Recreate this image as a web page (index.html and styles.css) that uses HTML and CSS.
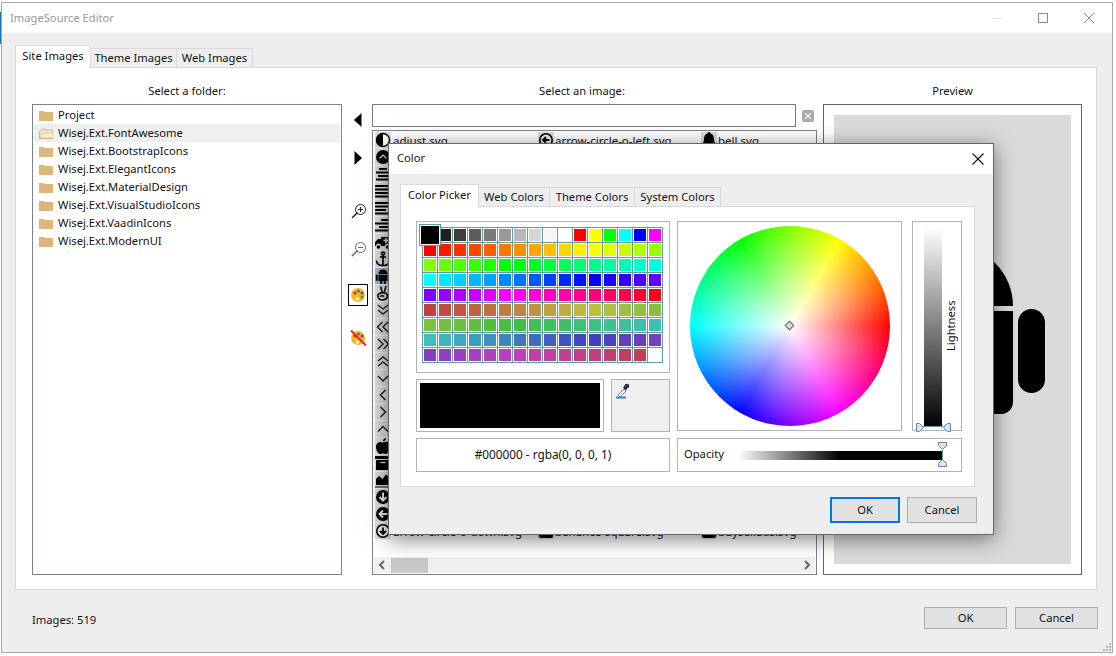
FILE: index.html
```html
<!DOCTYPE html>
<html lang="en">
<head>
<meta charset="utf-8">
<title>ImageSource Editor</title>
<link rel="stylesheet" href="styles.css">
</head>
<body>
<div class="desk-edge"></div>
<div class="window">
  <header class="titlebar">
    <span class="title">ImageSource Editor</span>
    <div class="win-controls">
      <span class="win-btn"><svg width="12" height="12" viewBox="0 0 12 12"><path d="M1 6.500h10" stroke="#e2e2e2"/></svg></span>
      <span class="win-btn"><svg width="12" height="12" viewBox="0 0 12 12"><rect x="1.500" y="1.500" width="9" height="9" fill="none" stroke="#8a8a8a"/></svg></span>
      <span class="win-btn"><svg width="12" height="12" viewBox="0 0 12 12"><path d="M1 1l10 10M11 1L1 11" stroke="#8a8a8a"/></svg></span>
    </div>
  </header>
  <div class="win-body">
    <div class="tabs main-tabs">
      <span class="tab active">Site Images</span>
      <span class="tab">Theme Images</span>
      <span class="tab">Web Images</span>
    </div>
    <div class="main-pane">
      <section class="col col-folders">
        <div class="col-label">Select a folder:</div>
        <ul class="folders">
          <li><svg class="folder" viewBox="0 0 14 11"><path d="M0 1h5l1 1h8v9H0z" fill="#dcb67a"/></svg>Project</li>
          <li class="sel"><svg class="folder" viewBox="0 0 14 11"><path d="M.5 10.500V4L3 1h3l1 1h6.500v8.500z" fill="#f3e6cf" stroke="#dcb67a"/><path d="M1 10l2-5h11v5z" fill="#f5edde" stroke="#dcb67a" stroke-width=".7"/></svg>Wisej.Ext.FontAwesome</li>
          <li><svg class="folder" viewBox="0 0 14 11"><path d="M0 1h5l1 1h8v9H0z" fill="#dcb67a"/></svg>Wisej.Ext.BootstrapIcons</li>
          <li><svg class="folder" viewBox="0 0 14 11"><path d="M0 1h5l1 1h8v9H0z" fill="#dcb67a"/></svg>Wisej.Ext.ElegantIcons</li>
          <li><svg class="folder" viewBox="0 0 14 11"><path d="M0 1h5l1 1h8v9H0z" fill="#dcb67a"/></svg>Wisej.Ext.MaterialDesign</li>
          <li><svg class="folder" viewBox="0 0 14 11"><path d="M0 1h5l1 1h8v9H0z" fill="#dcb67a"/></svg>Wisej.Ext.VisualStudioIcons</li>
          <li><svg class="folder" viewBox="0 0 14 11"><path d="M0 1h5l1 1h8v9H0z" fill="#dcb67a"/></svg>Wisej.Ext.VaadinIcons</li>
          <li><svg class="folder" viewBox="0 0 14 11"><path d="M0 1h5l1 1h8v9H0z" fill="#dcb67a"/></svg>Wisej.Ext.ModernUI</li>
        </ul>
      </section>

      <section class="col col-tools">
        <button class="tool t-prev"><svg width="8" height="14" viewBox="0 0 8 14"><path d="M7.500 0v14L0 7z"/></svg></button>
        <button class="tool t-next"><svg width="8" height="14" viewBox="0 0 8 14"><path d="M.5 0v14L8 7z"/></svg></button>
        <button class="tool t-zoomin"><svg width="16" height="16" viewBox="0 0 16 16" fill="none" stroke="#222"><circle cx="9.500" cy="6.500" r="5"/><path d="M6.500 9.500L1 15" stroke-width="1.500"/><path d="M7 6.500h5M9.500 4v5"/></svg></button>
        <button class="tool t-zoomout"><svg width="16" height="16" viewBox="0 0 16 16" fill="none" stroke="#666"><circle cx="9.500" cy="6.500" r="5"/><path d="M6.500 9.500L1 15" stroke-width="1.500"/><path d="M7 6.500h5"/></svg></button>
        <button class="tool t-palette"><svg width="16" height="16" viewBox="0 0 16 16"><ellipse cx="8" cy="8" rx="7" ry="7" fill="#f5b81f"/><circle cx="5" cy="6" r="1.500" fill="#d62e2e"/><circle cx="8.500" cy="4" r="1.500" fill="#3c6fd1"/><circle cx="12" cy="6" r="1.500" fill="#7b3fb3"/><circle cx="12" cy="10" r="1.500" fill="#3aa04a"/><circle cx="7.500" cy="12" r="1.800" fill="#fff2d0"/></svg></button>
        <button class="tool t-nopalette"><svg width="18" height="18" viewBox="0 0 18 18"><ellipse cx="9" cy="9" rx="7" ry="7" fill="#f5b81f"/><circle cx="6" cy="7" r="1.500" fill="#d62e2e"/><circle cx="9.500" cy="5" r="1.500" fill="#3c6fd1"/><circle cx="13" cy="7" r="1.500" fill="#7b3fb3"/><circle cx="8.500" cy="13" r="1.800" fill="#fff2d0"/><path d="M2 1.500l15 15" stroke="#e8242a" stroke-width="2"/></svg></button>
      </section>

      <section class="col col-images">
        <div class="col-label">Select an image:</div>
        <div class="search-row">
          <input class="search" type="text">
          <span class="clear"><svg width="8" height="8" viewBox="0 0 8 8"><path d="M1 1l6 6M7 1L1 7" stroke="#e9e9e9" stroke-width="1.500"/></svg></span>
        </div>
        <div class="image-list">
          <ul class="image-grid">
            <li><span class="ic"><svg viewBox="0 0 16 16"><circle cx="8" cy="8" r="6.500" fill="#fff" stroke="#000" stroke-width="1.400"/><path d="M8 1a7 7 0 0 0 0 14z"/></svg></span>adjust.svg</li>
            <li><span class="ic"><svg viewBox="0 0 16 16"><circle cx="8" cy="8" r="7"/><path d="M4.500 9.500L8 6l3.500 3.500" fill="none" stroke="#ddd" stroke-width="1.200"/></svg></span></li>
            <li><span class="ic"><svg viewBox="0 0 16 16"><path d="M4 2h8v2H4zM1 5.500h14v2H1zM3 9h10v2H3zM1 12.500h14v2H1z"/></svg></span></li>
            <li><span class="ic"><svg viewBox="0 0 16 16"><path d="M0 2h16v2H0zM0 5.500h16v2H0zM0 9h16v2H0zM0 12.500h16v2H0z"/></svg></span></li>
            <li><span class="ic"><svg viewBox="0 0 16 16"><path d="M0 2h13v2H0zM0 5.500h15v2H0zM0 9h11v2H0zM0 12.500h15v2H0z"/></svg></span></li>
            <li><span class="ic"><svg viewBox="0 0 16 16"><path d="M6 2h10v2H6zM0 5.500h16v2H0zM4 9h12v2H4zM0 12.500h16v2H0z"/></svg></span></li>
            <li><span class="ic"><svg viewBox="0 0 16 16"><path d="M6 3h10v9h-1a2.500 2.500 0 0 0-5 0H6a2.500 2.500 0 0 0-5 0H0V8l3-3h3z"/><circle cx="3.500" cy="13" r="1.800"/><circle cx="12.500" cy="13" r="1.800"/><path d="M11 4v5M8.500 6.500h5" stroke="#ddd" stroke-width="1.600"/></svg></span></li>
            <li><span class="ic"><svg viewBox="0 0 16 16" fill="none" stroke="#000" stroke-width="1.600"><circle cx="8" cy="2.500" r="1.500"/><path d="M8 4v10.500M5 6h6M1.500 9.500c0 3.500 3 5 6.500 5s6.500-1.500 6.500-5"/></svg></span></li>
            <li class="picked"><span class="ic"><svg viewBox="0 0 16 16"><path d="M3.500 6a4.500 4.500 0 0 1 9 0z"/><path d="M3.500 6.800h9V13h-9zM.8 6.800h2v6h-2zM13.200 6.800h2v6h-2zM5.200 13h2v3h-2zM8.800 13h2v3h-2z"/></svg></span></li>
            <li><span class="ic"><svg viewBox="0 0 16 16" fill="none" stroke="#000" stroke-width="1.500"><path d="M5.500 1.500l2 6.500M11 1L9 8M3 9.500c2-2 8-2.500 9 0s0 5-4 5.500-5.500-2.500-5-5.500z"/><path d="M5 11.500c1.500-1 3-1 4 0"/></svg></span></li>
            <li><span class="ic"><svg viewBox="0 0 16 16" class="chev"><path d="M3 3l5 4 5-4M3 8l5 4 5-4"/></svg></span></li>
            <li><span class="ic"><svg viewBox="0 0 16 16" class="chev"><path d="M7.500 3l-5 5 5 5M13 3L8 8l5 5"/></svg></span></li>
            <li><span class="ic"><svg viewBox="0 0 16 16" class="chev"><path d="M3 3l5 5-5 5M8.500 3l5 5-5 5"/></svg></span></li>
            <li><span class="ic"><svg viewBox="0 0 16 16" class="chev"><path d="M3 8l5-4 5 4M3 13l5-4 5 4"/></svg></span></li>
            <li><span class="ic"><svg viewBox="0 0 16 16" class="chev"><path d="M3 6l5 5 5-5"/></svg></span></li>
            <li><span class="ic"><svg viewBox="0 0 16 16" class="chev"><path d="M10.500 3l-5 5 5 5"/></svg></span></li>
            <li><span class="ic"><svg viewBox="0 0 16 16" class="chev"><path d="M5.500 3l5 5-5 5"/></svg></span></li>
            <li><span class="ic"><svg viewBox="0 0 16 16" class="chev"><path d="M3 10.500l5-5 5 5"/></svg></span></li>
            <li><span class="ic"><svg viewBox="0 0 16 16"><path d="M11 0c0 2-1.500 3.300-3 3.300C8 1.500 9.500 0 11 0zM8 4.500c2-1 5-1 6.500 1-2.500 1.500-2 4.800.5 6-1 2-2.500 4.500-4 4.500-1.200 0-1.800-.6-3-.6s-1.800.6-3 .6C3 16 1 12 1 9c0-3.500 2.500-5 4-5 1 0 2 .5 3 .5z"/></svg></span></li>
            <li><span class="ic"><svg viewBox="0 0 16 16"><path d="M0 1h16v3H0zM1 5h14v10H1z"/><path d="M5.500 7.500h5" stroke="#ddd" stroke-width="1.300"/></svg></span></li>
            <li><span class="ic"><svg viewBox="0 0 16 16"><path d="M1 13V7l3-3 3.500 3L11 2.500 15 6v7zM0 14.500h16v1H0z"/></svg></span></li>
            <li><span class="ic"><svg viewBox="0 0 16 16"><circle cx="8" cy="8" r="7"/><path d="M8 3.500v8M4.500 8L8 11.500 11.500 8" fill="none" stroke="#e8e8e8" stroke-width="2"/></svg></span></li>
            <li><span class="ic"><svg viewBox="0 0 16 16"><circle cx="8" cy="8" r="7"/><path d="M12.500 8h-8M8 4.500L4.500 8 8 11.500" fill="none" stroke="#e8e8e8" stroke-width="2"/></svg></span></li>
            <li><span class="ic"><svg viewBox="0 0 16 16"><circle cx="8" cy="8" r="6.200" fill="#eee" stroke="#000" stroke-width="1.600"/><path d="M8 4.500v5.500M5 8l3 3 3-3" fill="none" stroke="#000" stroke-width="1.800"/></svg></span>arrow-circle-o-down.svg</li>
            <li class="c2 first"><span class="ic"><svg viewBox="0 0 16 16"><circle cx="8" cy="8" r="6.200" fill="#eee" stroke="#000" stroke-width="1.600"/><path d="M11.500 8H6M8 5L5 8l3 3" fill="none" stroke="#000" stroke-width="1.800"/></svg></span>arrow-circle-o-left.svg</li>
            <li class="c2 last"><span class="ic"><svg viewBox="0 0 16 16"><rect x="1" y="1" width="14" height="14" rx="2.500"/></svg></span>behance-square.svg</li>
            <li class="c3 first"><span class="ic"><svg viewBox="0 0 16 16"><path d="M8 0c1 0 1.500.8 1.500 1.500C12.500 2.500 13 5 13 8c0 2 1.500 3 2.500 4.500H.5C1.500 11 3 10 3 8c0-3 .5-5.500 3.500-6.500C6.500.8 7 0 8 0zM6 13.500h4a2 2 0 0 1-4 0z"/></svg></span>bell.svg</li>
            <li class="c3 last"><span class="ic"><svg viewBox="0 0 16 16"><rect x="1" y="1" width="14" height="14" rx="2.500"/></svg></span>buysellads.svg</li>
          </ul>
          <div class="hscroll">
            <svg class="arrow" width="8" height="10" viewBox="0 0 8 10"><path d="M6 1L2 5l4 4" fill="none" stroke="#666" stroke-width="2"/></svg>
            <span class="thumb"></span>
            <svg class="arrow end" width="8" height="10" viewBox="0 0 8 10"><path d="M2 1l4 4-4 4" fill="none" stroke="#666" stroke-width="2"/></svg>
          </div>
        </div>
      </section>

      <section class="col col-preview">
        <div class="col-label">Preview</div>
        <div class="preview">
          <div class="preview-canvas">
            <svg width="237" height="449" viewBox="0 0 237 449">
              <path d="M58 191a60.500 60.500 0 0 1 121 0z"/>
              <path d="M58 196h121v91a12 12 0 0 1-12 12H70a12 12 0 0 1-12-12z"/>
              <rect x="184" y="194" width="27" height="84" rx="13.500"/>
              <rect x="26" y="194" width="27" height="84" rx="13.500"/>
              <rect x="80" y="299" width="27" height="46" rx="13.500"/>
              <rect x="130" y="299" width="27" height="46" rx="13.500"/>
            </svg>
          </div>
        </div>
      </section>
    </div>
    <footer class="win-footer">
      <span class="count">Images: 519</span>
      <div class="footer-btns">
        <button class="btn main-btn">OK</button>
        <button class="btn main-btn">Cancel</button>
      </div>
    </footer>
  </div>
  <svg class="grip" width="8" height="8" viewBox="0 0 8 8"><path d="M6 0h2v2H6zM3 3h2v2H3zM6 3h2v2H6zM0 6h2v2H0zM3 6h2v2H3zM6 6h2v2H6z" fill="#b5b5b5"/></svg>
</div>

<div class="dialog">
  <header class="dialog-title">
    <span class="dialog-name">Color</span>
    <span class="dialog-close"><svg width="12" height="12" viewBox="0 0 12 12"><path d="M.5.500l11 11M11.500.500l-11 11" stroke="#111" stroke-width="1.100"/></svg></span>
  </header>
  <div class="dialog-body">
    <div class="tabs color-tabs">
      <span class="tab active">Color Picker</span>
      <span class="tab">Web Colors</span>
      <span class="tab">Theme Colors</span>
      <span class="tab">System Colors</span>
    </div>
    <div class="color-pane">
      <div class="color-left">
        <div class="box palette-box"><div class="palette" id="palette"></div></div>
        <div class="sample-row">
          <div class="box sample"><div class="sample-fill"></div></div>
          <button class="eyedrop"><svg width="16" height="16" viewBox="0 0 16 16"><path d="M1 14.500h10" stroke="#2f7fe0" stroke-width="2"/><path d="M3 12l6-6 2 2-6 6z" fill="#eef" stroke="#666" stroke-width=".8"/><path d="M8 4.500l1-1 1.500-2.500 3 2-1.500 2.500-1 2z" fill="#222"/><circle cx="12" cy="3" r="2.300" fill="#333"/></svg></button>
        </div>
        <div class="box value-box">#000000 - rgba(0, 0, 0, 1)</div>
      </div>
      <div class="color-right">
        <div class="color-top">
          <div class="box wheel-box">
            <div class="wheel"><span class="wheel-mark"></span></div>
          </div>
          <div class="box light-box">
            <div class="light-grad"></div>
            <span class="light-label">Lightness</span>
            <svg class="h-left" width="8" height="9" viewBox="0 0 8 9"><path d="M.5.500h3l4 4-4 4h-3z" fill="#e4e4e0" stroke="#5f86b3"/></svg>
            <svg class="h-right" width="8" height="9" viewBox="0 0 8 9"><path d="M7.500.500h-3l-4 4 4 4h3z" fill="#e4e4e0" stroke="#5f86b3"/></svg>
            <span class="h-line"></span>
          </div>
        </div>
        <div class="box opacity-box">
          <span class="op-label">Opacity</span>
          <div class="op-grad"></div>
          <svg class="o-top" width="9" height="8" viewBox="0 0 9 8"><path d="M.5.500h8v3l-4 4-4-4z" fill="#e4e4e0" stroke="#5f86b3"/></svg>
          <svg class="o-bot" width="9" height="8" viewBox="0 0 9 8"><path d="M.5 7.500h8v-3l-4-4-4 4z" fill="#e4e4e0" stroke="#5f86b3"/></svg>
          <span class="o-line"></span>
        </div>
      </div>
    </div>
    <div class="dialog-btns">
      <button class="btn dlg-btn primary">OK</button>
      <button class="btn dlg-btn">Cancel</button>
    </div>
  </div>
</div>
<script src="app.js"></script>
</body>
</html>
```
FILE: styles.css
```css
* { box-sizing: border-box; }
html, body { margin: 0; height: 100%; }
body {
  background: #fff;
  color: #111;
  font: 11.2px/16px "Noto Sans", "Liberation Sans", sans-serif;
  overflow: hidden;
  position: relative;
}
ul { list-style: none; margin: 0; padding: 0; }
button { font: inherit; color: inherit; padding: 0; background: none; border: 0; }

.desk-edge { position: absolute; left: 0; top: 12px; width: 1px; height: 32px; background: #1f6fb0; }

.window {
  position: absolute; left: 1px; top: 2px;
  width: 1112px; height: 651px;
  border: 1px solid #a8a8a8;
  background: #eee;
  display: flex; flex-direction: column;
}
.titlebar { height: 30px; background: #fff; display: flex; align-items: center; padding-left: 8px; flex: none; }
.title { color: #999; }
.win-controls { margin-left: auto; display: flex; }
.win-btn { width: 46px; height: 30px; display: flex; align-items: center; justify-content: center; }

.win-body { padding: 12px 15px 0 13px; flex: 1; display: flex; flex-direction: column; }

.tabs { display: flex; align-items: flex-end; height: 22px; position: relative; z-index: 1; }
.tab {
  height: 19px; line-height: 18px;
  border: 1px solid #d9d9d9; border-bottom: 0; border-left: 0;
  background: #eee;
  text-align: center;
  white-space: nowrap;
}
.tab.active {
  height: 23px; line-height: 19px; margin-bottom: -1px;
  background: #fff; border-left: 1px solid #d9d9d9;
}
.main-tabs .tab:nth-child(1) { width: 76px; }
.main-tabs .tab:nth-child(2) { width: 86px; }
.main-tabs .tab:nth-child(3) { width: 76px; }
.color-tabs .tab:nth-child(1) { width: 79px; }
.color-tabs .tab:nth-child(2) { width: 71px; }
.color-tabs .tab:nth-child(3) { width: 85px; }
.color-tabs .tab:nth-child(4) { width: 86px; }

.main-pane {
  height: 523px; width: 1082px;
  border: 1px solid #d9d9d9;
  background: #fff;
  display: flex;
  padding-left: 16px;
  flex: none;
}
.col { display: flex; flex-direction: column; flex: none; }
.col-label { height: 36px; padding-top: 15px; text-align: center; }
.col-folders { width: 310px; }
.col-tools { width: 30px; padding: 36px 0 0 2px; align-items: center; }
.col-images { width: 445px; }
.col-images .col-label { width: 420px; }
.col-preview { width: 259px; margin-left: 6px; }

.folders { height: 471px; border: 1px solid #7d838a; padding: 1px; }
.folders li { height: 18px; line-height: 18px; display: flex; align-items: center; padding-left: 5px; }
.folders li.sel { background: #efefef; }
.folder { width: 14px; height: 11px; margin-right: 5px; flex: none; }

.tool { display: flex; align-items: center; justify-content: center; width: 20px; height: 22px; flex: none; }
.t-prev { margin-top: 5px; }
.t-next { margin-top: 16px; }
.t-zoomin { margin-top: 31px; }
.t-zoomout { margin-top: 16px; }
.t-zoomin svg, .t-zoomout svg { margin-left: 2px; }
.t-palette { margin-top: 24px; border: 1px solid #000; }
.t-nopalette { margin-top: 21px; }

.search-row { display: flex; align-items: center; height: 23px; margin-bottom: 3px; }
.search { width: 424px; height: 23px; border: 1px solid #7a7a7a; margin: 0; background: #fff; }
.clear {
  width: 12px; height: 12px; margin-left: 6px;
  background: #a9a9a9; border-radius: 2px;
  display: flex; align-items: center; justify-content: center;
}
.image-list {
  height: 445px; border: 1px solid #7f8087;
  padding: 1px;
  display: flex; flex-direction: column;
}
.image-grid {
  display: grid;
  grid-auto-flow: column;
  grid-template-rows: repeat(24, 17px);
  grid-template-columns: repeat(3, 163px);
  height: 408px;
  margin-left: 1px;
  overflow: hidden;
  font-size: 11.5px;
}
.image-grid li { display: flex; align-items: center; white-space: nowrap; overflow: hidden; }
.image-grid .c2 { grid-column: 2; }
.image-grid .c3 { grid-column: 3; }
.image-grid .first { grid-row: 1; }
.image-grid .last { grid-row: 24; }
.ic { width: 16px; height: 17px; margin-right: 2px; background: #dcdcdc; border-bottom: 1px solid #f2f2f2; flex: none; display: flex; }
.c2 .ic, .c3 .ic { margin-right: 1px; }
.ic svg { width: 16px; height: 16px; display: block; }
.picked .ic { background: #9cb9d6; }
.chev { fill: none; stroke: #222; stroke-width: 1.500; }
.hscroll {
  margin-top: auto; height: 16px; background: #f0f0f0;
  display: flex; align-items: center;
  padding-left: 4px;
}
.thumb { width: 37px; height: 15px; background: #c8c8c8; margin-left: 5px; }
.arrow.end { margin-left: auto; margin-right: 4px; }

.preview { height: 471px; border: 1px solid #666; padding: 10px; }
.preview-canvas { height: 449px; background: #dbdbdb; }
.preview-canvas svg { display: block; }

.win-footer { flex: 1; display: flex; padding: 17px 0 0 17px; }
.count { line-height: 22px; margin-top: 2px; }
.footer-btns { margin-left: auto; margin-right: -1px; display: flex; gap: 8px; }
.btn { background: #e1e1e1; border: 1px solid #adadad; text-align: center; }
.main-btn { width: 83px; height: 22px; }

.grip { position: absolute; right: 1px; bottom: 1px; }

.dialog {
  position: absolute; left: 388px; top: 143px;
  width: 606px; height: 392px;
  border: 1px solid #666;
  background: #eee;
  box-shadow: 0 4px 20px rgba(0, 0, 0, .5);
}
.dialog-title { height: 30px; background: #fff; display: flex; align-items: center; padding-left: 8px; }
.dialog-name { margin-bottom: 2px; }
.dialog-close { margin-left: auto; width: 30px; display: flex; justify-content: center; }
.dialog-body { padding: 10px 18px 0 11px; }
.color-pane {
  height: 281px; border: 1px solid #d9d9d9; background: #fff;
  padding: 14px 12px 0 15px;
  display: flex; gap: 7px;
}
.box { border: 1px solid #b2b2b2; background: #fff; }
.color-left { width: 254px; flex: none; display: flex; flex-direction: column; gap: 6px; }
.palette-box { height: 152px; padding: 5px; }
.palette {
  position: relative;
  width: 241px; height: 136px;
  background: #5f9ea0;
  padding: 1px;
  display: grid;
  grid-template-columns: repeat(16, 14px);
  grid-auto-rows: 14px;
  gap: 1px;
}
.swatch { border: 1px solid #fff; display: block; }
.swatch.selected { position: relative; }
.swatch.selected::after {
  content: ""; position: absolute; left: -5px; top: -5px;
  box-sizing: border-box;
  width: 22px; height: 22px;
  background: #000;
  border: 1px solid #5f9ea0;
  box-shadow: inset 0 0 0 1px #fff;
}
.sample-row { display: flex; gap: 7px; height: 53px; }
.sample { width: 188px; padding: 3px; flex: none; }
.sample-fill { background: #000; height: 100%; }
.eyedrop {
  flex: 1; background: #efefef; border: 1px solid #b2b2b2;
  display: flex; align-items: flex-start; padding: 3px;
}
.value-box { height: 34px; display: flex; align-items: center; justify-content: center; font-size: 11.8px; padding-bottom: 2px; }

.color-right { width: 285px; flex: none; display: flex; flex-direction: column; gap: 7px; }
.color-top { display: flex; gap: 10px; height: 210px; }
.wheel-box { width: 225px; display: flex; align-items: center; justify-content: center; }
.wheel {
  width: 200px; height: 200px; border-radius: 50%;
  position: relative;
  margin-top: -1px;
  background:
    radial-gradient(closest-side, #fff, rgba(255, 255, 255, 0)),
    conic-gradient(from 90deg, #f00, #f0f, #00f, #0ff, #0f0, #ff0, #f00);
}
.wheel-mark {
  position: absolute; left: 96px; top: 96px;
  width: 7px; height: 7px;
  background: #ddd; border: 1px solid #666;
  transform: rotate(45deg);
}
.light-box { width: 50px; display: flex; position: relative; }
.light-grad { width: 18px; height: 200px; margin: 5px 0 0 11px; background: linear-gradient(#fff, #000); flex: none; }
.light-label {
  width: 18px; writing-mode: vertical-rl; transform: rotate(180deg);
  text-align: center; line-height: 18px; height: 208px;
}
.h-left { position: absolute; left: 3px; top: 201px; }
.h-right { position: absolute; left: 30px; top: 201px; }
.h-line { position: absolute; left: 10px; top: 204px; width: 20px; height: 1px; background: #5f9ea0; }

.opacity-box { height: 34px; position: relative; display: flex; align-items: center; padding-left: 6px; }
.op-label { width: 54px; flex: none; margin-bottom: 2px; }
.op-grad { width: 204px; height: 9px; background: linear-gradient(90deg, rgba(0, 0, 0, 0), #000 50%); }
.o-top { position: absolute; left: 260px; top: 3px; }
.o-bot { position: absolute; left: 260px; top: 20px; }
.o-line { position: absolute; left: 264px; top: 11px; width: 1px; height: 9px; background: #5f9ea0; }

.dialog-btns { display: flex; justify-content: flex-end; gap: 7px; padding-top: 10px; margin-right: -2px; }
.dlg-btn { width: 70px; height: 26px; }
.dlg-btn.primary { border: 2px solid #0078d7; }
```
FILE: app.js
```js
// Builds the colour palette grid: a grey/primary row, then hue ramps.
var palette = document.getElementById('palette');
var first = ['#000', '#1f1f1f', '#3d3d3d', '#5c5c5c', '#7a7a7a', '#999', '#b8b8b8', '#d6d6d6',
             '#f5f5f5', '#fff', '#f00', '#ff0', '#0f0', '#0ff', '#00f', '#f0f'];
function add(color, selected) {
  var s = document.createElement('span');
  s.className = selected ? 'swatch selected' : 'swatch';
  s.style.background = color;
  palette.appendChild(s);
}
first.forEach(function (c, i) { add(c, i === 0); });
[[100, 50], [50, 50]].forEach(function (tone) {
  [0, 90, 180, 270].forEach(function (start) {
    for (var i = 0; i < 16; i++) {
      add('hsl(' + (start + i * 5.6) + ',' + tone[0] + '%,' + tone[1] + '%)');
    }
  });
});
palette.lastChild.style.background = '#fff';
```
